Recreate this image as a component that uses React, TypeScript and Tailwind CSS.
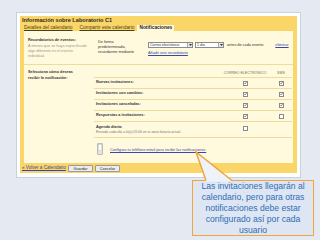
import React from 'react';

const font = "font-['Liberation_Sans',Arial,sans-serif]";

function Check({ checked }: { checked: boolean }) {
  return (
    <span className="inline-flex w-[5px] h-[5px] border-[0.5px] border-[#8a8a8a] bg-white items-center justify-center">
      {checked && (
        <svg width="4" height="4" viewBox="0 0 4 4">
          <path d="M0.6 2 L1.6 3.1 L3.4 0.8" fill="none" stroke="#333" strokeWidth="0.8" />
        </svg>
      )}
    </span>
  );
}

function Select({ label, width }: { label: string; width: string }) {
  return (
    <div className={`${width} h-[6px] flex border-[0.5px] border-[#8c8c8c] bg-white`}>
      <span className="flex-1 text-[3.6px] leading-[5px] pl-[1px] text-[#333] overflow-hidden whitespace-nowrap">{label}</span>
      <span className="w-[5px] h-full bg-[#e6e6e6] border-l-[0.5px] border-[#aaa] flex items-center justify-center">
        <svg width="3" height="2" viewBox="0 0 3 2">
          <path d="M0 0 L3 0 L1.5 2 Z" fill="#333" />
        </svg>
      </span>
    </div>
  );
}

const rows = [
  { label: 'Nuevas invitaciones:', email: true, sms: true },
  { label: 'Invitaciones con cambios:', email: true, sms: true },
  { label: 'Invitaciones canceladas:', email: true, sms: true },
  { label: 'Respuestas a invitaciones:', email: true, sms: false },
];

export default function App() {
  return (
    <div className={`relative w-[320px] h-[240px] overflow-hidden bg-[#e5e9f1] pt-[12px] pl-[16px] ${font}`}>
      {/* panel */}
      <div className="w-[285px] h-[166px] border border-[#c6d2e2] bg-white pt-[3px] pb-[4px] px-[3px]">
        <div className="h-full flex flex-col bg-[#fad567]">
          <div className="h-[9px] pl-[2px] text-[5.6px] leading-[9px] font-bold text-[#2a2a2a] whitespace-nowrap">
            Información sobre Laboratorio C1
          </div>
          <div className="h-[6px] flex items-end pl-[4px] text-[4.8px] leading-[6px] whitespace-nowrap">
            <span className="underline text-[#4a3f1c]">Detalles del calendario</span>
            <span className="ml-[7px] underline text-[#4a3f1c]">Compartir este calendario</span>
            <span className="ml-[3px] px-[2px] bg-[#fff9de] font-bold text-[#222]">Notificaciones</span>
          </div>

          {/* content */}
          <div className="flex-1 mx-[4px] bg-[#fff9de] flex flex-col">
            {/* reminders */}
            <div className="h-[34px] flex border-b-[0.5px] border-[#eedc9c]">
              <div className="w-[74px] pl-[4px] pt-[7px]">
                <div className="text-[3.8px] leading-[5px] font-bold text-[#333] whitespace-nowrap">Recordatorios de eventos:</div>
                <div className="w-[62px] mt-[1px] text-[3.8px] leading-[5px] text-[#9a9a90]">
                  A menos que se haya especificado algo diferente en el evento individual.
                </div>
              </div>
              <div className="w-[50px] pt-[9px] text-[3.8px] leading-[5px] text-[#333]">
                De forma<br />predeterminada,<br />recordarme mediante
              </div>
              <div className="pt-[11px]">
                <div className="flex items-center">
                  <Select label="Correo electrónico" width="w-[45px]" />
                  <div className="ml-[2px]">
                    <Select label="1 día" width="w-[29px]" />
                  </div>
                  <span className="ml-[3px] text-[3.8px] leading-[6px] text-[#333] whitespace-nowrap">antes de cada evento</span>
                  <span className="ml-[12px] text-[3.8px] leading-[6px] text-[#3448b0] underline">eliminar</span>
                </div>
                <div className="mt-[3px] text-[3.8px] leading-[5px] text-[#3448b0] underline whitespace-nowrap">
                  Añadir otro recordatorio
                </div>
              </div>
            </div>

            {/* notifications */}
            <div className="flex">
              <div className="w-[70px] pl-[4px] pt-[4px] text-[3.8px] leading-[6px] font-bold text-[#333]">
                Selecciona cómo deseas<br />recibir la notificación:
              </div>
              <div className="w-[198px] flex flex-col">
                <div className="h-[13px] flex items-end pb-[2px] border-b-[0.5px] border-[#eedc9c] text-[3.6px] leading-[4px] text-[#77704f]">
                  <span className="flex-1" />
                  <span className="w-[50px] text-center whitespace-nowrap">CORREO ELECTRÓNICO</span>
                  <span className="w-[22px] text-center">SMS</span>
                </div>
                {rows.map(r => (
                  <div key={r.label} className="h-[11px] flex items-center border-b-[0.5px] border-[#eedc9c]">
                    <span className="flex-1 pl-[2px] text-[3.8px] font-bold text-[#333] whitespace-nowrap">{r.label}</span>
                    <span className="w-[50px] flex justify-center"><Check checked={r.email} /></span>
                    <span className="w-[22px] flex justify-center"><Check checked={r.sms} /></span>
                  </div>
                ))}
                <div className="h-[16px] flex border-b-[0.5px] border-[#eedc9c]">
                  <div className="flex-1 pl-[2px] pt-[3px]">
                    <div className="text-[3.8px] leading-[5px] font-bold text-[#333]">Agenda diaria:</div>
                    <div className="text-[3.4px] leading-[5px] text-[#777] whitespace-nowrap">
                      Enviada cada día a la(s) 05:00 en tu zona horaria actual.
                    </div>
                  </div>
                  <span className="w-[50px] flex justify-center pt-[4px]"><Check checked={false} /></span>
                  <span className="w-[22px]" />
                </div>
              </div>
            </div>

            {/* mobile */}
            <div className="flex pl-[73px] pt-[5px]">
              <svg width="6" height="12" viewBox="0 0 6 12">
                <rect x="0.4" y="0.4" width="5.2" height="11.2" rx="1" fill="#e4e4e4" stroke="#8d8d8d" strokeWidth="0.6" />
                <rect x="1.2" y="1.6" width="3.6" height="6" fill="#fff" stroke="#a0a0a0" strokeWidth="0.3" />
              </svg>
              <span className="ml-[7px] mt-[5px] text-[3.8px] leading-[5px] text-[#3448b0] underline whitespace-nowrap">
                Configura tu teléfono móvil para recibir las notificaciones.
              </span>
            </div>
          </div>

          {/* bottom bar */}
          <div className="h-[10px] flex items-center pl-[2px]">
            <span className="text-[4.6px] leading-[6px] text-[#3448b0] underline whitespace-nowrap">« Volver a Calendario</span>
            <button className="ml-[2px] w-[25px] h-[7px] border-[0.5px] border-[#9a9a9a] bg-[#ececec] rounded-[1px] text-[3.8px] leading-[6px] text-[#222]">
              Guardar
            </button>
            <button className="ml-[2px] w-[25px] h-[7px] border-[0.5px] border-[#9a9a9a] bg-[#ececec] rounded-[1px] text-[3.8px] leading-[6px] text-[#222]">
              Cancelar
            </button>
          </div>
        </div>
      </div>

      {/* callout */}
      <div className="absolute left-[192px] top-[180px] w-[122px] h-[56px] bg-[#dde6f2] border-[1.5px] border-[#f2a53a] text-center text-[8.6px] leading-[11px] text-[#2f6db6]">
        Las invitaciones llegarán al<br />calendario, pero para otras<br />notificaciones debe estar<br />configurado así por cada<br />usuario
      </div>
      <svg className="absolute left-0 top-0" width="320" height="240" viewBox="0 0 320 240">
        <polygon points="196,152 206,181.5 232,181.5" fill="#eef3f9" />
        <polyline points="206,180.5 196,152 232,180.5" fill="none" stroke="#f2a53a" strokeWidth="1.5" strokeLinejoin="miter" />
      </svg>
    </div>
  );
}
